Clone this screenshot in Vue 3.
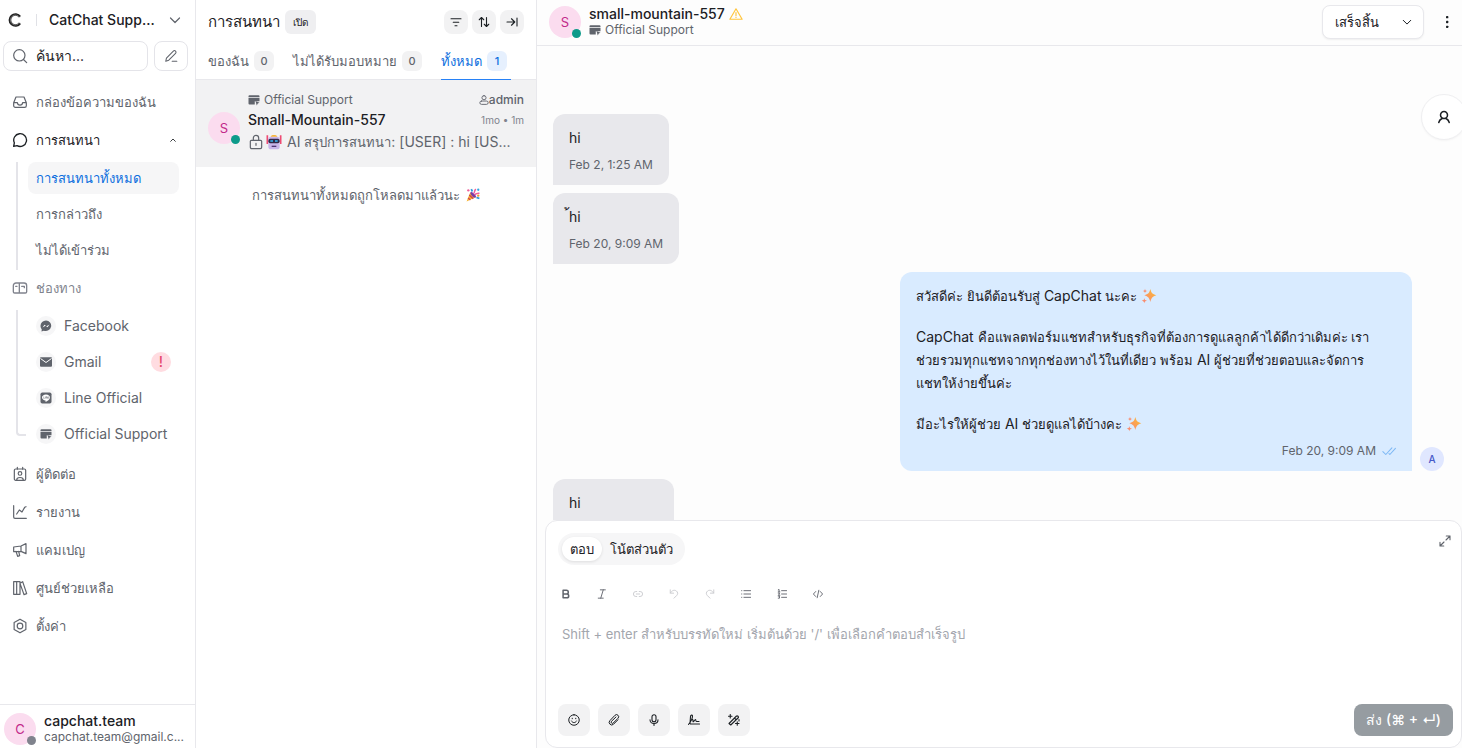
<template>
  <div class="app">
    <aside class="sidebar">
      <header class="brand">
        <Icon name="logo" class="brand-logo" />
        <span class="brand-divider"></span>
        <button type="button" class="account-switch">
          <span class="account-name">CatChat Supp...</span>
          <Icon name="chevronDown" class="icon-12" />
        </button>
      </header>
      <div class="search-row">
        <label class="search">
          <Icon name="search" class="icon-16" />
          <input v-model="search" type="text" placeholder="ค้นหา..." aria-label="ค้นหา" />
        </label>
        <button type="button" class="compose-button" aria-label="เขียนข้อความ">
          <Icon name="pen" class="icon-14" />
        </button>
      </div>

      <nav class="nav">
        <a href="#" class="nav-item"><Icon name="inbox" class="icon-16" /><span>กล่องข้อความของฉัน</span></a>
        <button type="button" class="nav-item is-open" @click="showConversations = !showConversations">
          <Icon name="bubble" class="icon-16" />
          <span>การสนทนา</span>
          <Icon name="chevronUp" class="nav-caret" />
        </button>
        <ul v-if="showConversations" class="sub-nav">
          <li v-for="item in views" :key="item">
            <a href="#" class="sub-item" :class="{ active: item === currentView }" @click.prevent="currentView = item">{{ item }}</a>
          </li>
        </ul>
        <a href="#" class="nav-item muted"><Icon name="mailbox" class="icon-16" /><span>ช่องทาง</span></a>
        <ul class="sub-nav tree">
          <li v-for="channel in channels" :key="channel.name">
            <a href="#" class="sub-item channel">
              <span class="channel-icon"><Icon :name="channel.icon" class="icon-12" /></span>
              <span>{{ channel.name }}</span>
              <span v-if="channel.warning" class="channel-warning">!</span>
            </a>
          </li>
        </ul>
        <a v-for="item in links" :key="item.label" href="#" class="nav-item">
          <Icon :name="item.icon" class="icon-16" /><span>{{ item.label }}</span>
        </a>
      </nav>

      <footer class="profile">
        <span class="avatar">C<i class="status offline"></i></span>
        <span class="profile-text">
          <strong>capchat.team</strong>
          <small>capchat.team@gmail.c...</small>
        </span>
      </footer>
    </aside>

    <section class="list">
      <header class="list-header">
        <h1>การสนทนา</h1>
        <span class="list-status">เปิด</span>
        <div class="list-actions">
          <button type="button" aria-label="ตัวกรอง"><Icon name="filter" class="icon-12" /></button>
          <button type="button" aria-label="เรียงลำดับ"><Icon name="sort" class="icon-12" /></button>
          <button type="button" aria-label="ขยาย"><Icon name="arrowEnd" class="icon-12" /></button>
        </div>
      </header>
      <div class="tabs">
        <button
          v-for="tab in tabs"
          :key="tab.label"
          type="button"
          class="tab"
          :class="{ active: tab.label === currentTab }"
          @click="currentTab = tab.label"
        >
          {{ tab.label }}<span class="tab-count">{{ tab.count }}</span>
        </button>
      </div>
      <article class="card">
        <span class="avatar">S<i class="status online"></i></span>
        <div class="card-body">
          <div class="card-row small">
            <span class="inbox-name"><Icon name="website" class="icon-12" />Official Support</span>
            <span class="assignee"><Icon name="person" class="icon-10" />admin</span>
          </div>
          <div class="card-row">
            <h2>Small-Mountain-557</h2>
            <time>1mo • 1m</time>
          </div>
          <p class="preview">
            <Icon name="lock" class="icon-16" />
            <Icon name="robot" class="icon-16" />
            <span class="preview-text">AI <span class="thai">สรุปการสนทนา</span>: [USER] : hi [US...</span>
          </p>
        </div>
      </article>
      <p class="list-end">การสนทนาทั้งหมดถูกโหลดมาแล้วนะ <Icon name="party" class="icon-14" /></p>
    </section>

    <main class="chat">
      <header class="chat-header">
        <span class="avatar">S<i class="status online"></i></span>
        <div class="contact">
          <h2>small-mountain-557 <Icon name="warning" class="icon-14 warning" /></h2>
          <span class="inbox-name"><Icon name="website" class="icon-12" />Official Support</span>
        </div>
        <button type="button" class="resolve">เสร็จสิ้น<Icon name="chevronDown" class="icon-10" /></button>
        <button type="button" class="more" aria-label="เพิ่มเติม"><Icon name="dots" class="icon-16" /></button>
      </header>

      <div class="messages">
        <button type="button" class="contact-toggle" aria-label="ผู้ติดต่อ"><Icon name="contact" class="icon-14" /></button>
        <div v-for="(message, index) in messages" :key="index" class="message" :class="{ outgoing: message.outgoing }">
          <div class="bubble">
            <p v-for="line in message.lines" :key="line.text">
              <template v-for="(run, i) in splitRuns(line.text)" :key="i">
                <span v-if="i % 2" class="thai">{{ run }}</span>
                <template v-else>{{ run }}</template>
              </template>
              <Icon v-if="line.sparkle" name="sparkles" class="icon-16" />
            </p>
            <span class="meta">{{ message.time }}<Icon v-if="message.outgoing" name="checks" class="icon-14" /></span>
          </div>
          <span v-if="message.outgoing" class="sender">A</span>
        </div>
      </div>

      <form class="composer" @submit.prevent>
        <div class="composer-top">
          <div class="modes">
            <button type="button" :class="{ active: mode === 'reply' }" @click="mode = 'reply'">ตอบ</button>
            <button type="button" :class="{ active: mode === 'note' }" @click="mode = 'note'">โน้ตส่วนตัว</button>
          </div>
          <button type="button" class="expand" aria-label="ขยาย"><Icon name="expand" class="icon-12" /></button>
        </div>
        <div class="toolbar">
          <button v-for="tool in tools" :key="tool.icon" type="button" :disabled="tool.disabled" :aria-label="tool.icon">
            <Icon :name="tool.icon" class="icon-10" />
          </button>
        </div>
        <textarea
          v-model="draft"
          aria-label="ข้อความ"
          placeholder="Shift + enter สำหรับบรรทัดใหม่ เริ่มต้นด้วย '/' เพื่อเลือกคำตอบสำเร็จรูป"
        ></textarea>
        <div class="composer-bottom">
          <button v-for="name in attachments" :key="name" type="button" class="attach" :aria-label="name">
            <Icon :name="name" class="icon-12" />
          </button>
          <button type="submit" class="send">ส่ง (⌘ + ↵)</button>
        </div>
      </form>
    </main>
  </div>
</template>

<script setup>
import { h, ref } from 'vue';

const stroke = (d, width = 1.8) =>
  `<path d="${d}" fill="none" stroke="currentColor" stroke-width="${width}" stroke-linecap="round" stroke-linejoin="round"/>`;

const icons = {
  logo: '<path d="M20.500 6.500A9.500 9.500 0 1 0 20.500 17.500" fill="none" stroke="#222" stroke-width="4.500"/><path d="M20 7.500A8.500 8.500 0 1 0 20 16.500" fill="none" stroke="#aaa" stroke-width="1"/>',
  chevronDown: stroke('M3 8l9 9 9-9', 2.4),
  chevronUp: stroke('M5 16l7-7 7 7', 2.6),
  search: stroke('M11 2.500a8.500 8.500 0 1 0 0 17 8.500 8.500 0 0 0 0-17zM17.200 17.200L22 22'),
  pen: stroke('M3 21l1.200-5.500L16 3.500a2.600 2.600 0 0 1 3.800 3.800L8.200 19.200zM14 21h8'),
  inbox: stroke('M2.500 13L6 4.500h12l3.500 8.500v4.500a2.500 2.500 0 0 1-2.500 2.500H5a2.500 2.500 0 0 1-2.500-2.500zM2.500 13H8c.5 5 7.500 5 8 0h5.500'),
  bubble: stroke('M2.500 21.500l1-5.300A9.600 9.600 0 1 1 7.500 20.500z', 2),
  mailbox: stroke('M6 4.500h12a4 4 0 0 1 4 4v9a2 2 0 0 1-2 2H4a2 2 0 0 1-2-2v-9a4 4 0 0 1 4-4zM11 5v14M5.500 9.500h2M14.500 9.500h4v2', 2),
  messenger: '<path d="M12 1a11 10.500 0 0 0-11 10.500c0 2.800 1 5 2.500 7L3 23l4.500-1.700A11 10.500 0 1 0 12 1z" fill="currentColor"/><path d="M5 15l4-5.500 4 3 6-3.500-4 5.500-4-3z" fill="#fff"/>',
  mail: '<rect x="0" y="2.500" width="24" height="19" rx="2" fill="currentColor"/><path d="M1 5l11 8 11-8" fill="none" stroke="#fff" stroke-width="2"/>',
  line: '<rect x="1" y="1" width="22" height="22" rx="3.500" fill="currentColor"/><path d="M12 5c-4.600 0-8 2.700-8 6.100 0 3.200 3.200 5.500 7.100 5.900v3c3.200-1.600 8.900-4.900 8.900-8.900C20 7.700 16.600 5 12 5z" fill="#fff"/><path d="M7.500 9v4H9M11 9v4M13 13V9l2.500 4V9M17.500 9v4" fill="none" stroke="currentColor" stroke-width="1"/>',
  website: '<path d="M1 4.500a2 2 0 0 1 2-2h18a2 2 0 0 1 2 2v2H1zM1 8h22v6.500h-9.500V21H3a2 2 0 0 1-2-2z" fill="currentColor"/><path d="M15 14l8 3.500-3.500 1.500-2 4z" fill="currentColor"/>',
  contacts: stroke('M5.500 4.500h13a2 2 0 0 1 2 2v13a2 2 0 0 1-2 2h-13a2 2 0 0 1-2-2v-13a2 2 0 0 1 2-2zM8 2v3M16 2v3M12 8.500a2.700 2.700 0 1 0 0 5.400 2.700 2.700 0 0 0 0-5.400zM7 21c0-5 10-5 10 0'),
  chart: stroke('M2.500 2.500v17a2 2 0 0 0 2 2h17M7 15l4-6 4 3 4-7 2-1'),
  campaign: stroke('M2.500 7.500l11-1.500 7.500-3.500v15l-7.500-3.500-11 .5zM13.500 6v7.500M6 14l2.500 7.500 3-1L10 14'),
  book: stroke('M2.500 2.500h4.500v19H2.500zM7 2.500h5v19H7zM12 5l4-2.500 6 18-4 1.500z'),
  settings: stroke('M12 1.800l8.800 5v10.400l-8.800 5-8.800-5V6.800zM12 7.800a4.200 4.200 0 1 0 0 8.400 4.200 4.200 0 0 0 0-8.400z'),
  filter: stroke('M2 5.500h20M6.500 12.500h11M10 19.500h4', 2.2),
  sort: stroke('M7 21V3M2.500 7.500L7 3l4.500 4.500M17 3v18M12.500 16.500L17 21l4.500-4.500', 2.2),
  arrowEnd: stroke('M2 12h15M11 5.500l6.500 6.500-6.500 6.500M22 4v16', 2.2),
  person: stroke('M12 1.500a5 5 0 1 0 0 10 5 5 0 0 0 0-10zM6 14.500h12a4 4 0 0 1 0 8H6a4 4 0 0 1 0-8z', 2.2),
  contact: stroke('M12 2.500a6 6 0 1 0 0 12 6 6 0 0 0 0-12zM3 21.500c1-4 3.500-6 5.500-7M21 21.500c-1-4-3.500-6-5.500-7', 2.6),
  lock: stroke('M5 9.500h14a1.500 1.500 0 0 1 1.500 1.500v9a2 2 0 0 1-2 2h-13a2 2 0 0 1-2-2v-9A1.500 1.500 0 0 1 5 9.500zM8 9V6a4 4 0 0 1 8 0v3M12 14v3'),
  robot: '<path d="M2 2v13M22 2v13" stroke="#ee4b73" stroke-width="2.500"/><rect x="3.500" y="4" width="17" height="19" rx="4" fill="#c9b6ea"/><path d="M7 4c0-3.500 10-3.500 10 0z" fill="#f6b33b"/><rect x="3.500" y="7" width="17" height="7" rx="3" fill="#322948"/><path d="M6.500 10.500h4M13.500 10.500h4" stroke="#39b7f5" stroke-width="2.400"/><path d="M8.500 18.500h7" stroke="#503673" stroke-width="2"/>',
  party: '<path d="M1 23L7 8c5 1 8 4 9 8z" fill="#f7b52d"/><path d="M3.500 17l4 3.500M5.500 12l7 6.500" stroke="#cf3b55" stroke-width="2"/><path d="M8 7c-3 3 6 12 9 9 2-2-6-11-9-9z" fill="#7a3ca5"/><path d="M13 9c3-1 0-4 4-7M15 12c3-4 5-1 8-4" fill="none" stroke="#ee5f9b" stroke-width="2.500"/><path d="M9 2l2 4M18 16l5 2" stroke="#2e9cdb" stroke-width="3"/><circle cx="4" cy="4" r="2" fill="#ee5f9b"/><circle cx="21" cy="3" r="2" fill="#35a8e0"/><circle cx="21" cy="13" r="2" fill="#f29a2e"/>',
  sparkles: '<defs><linearGradient id="spark" x1="0" y1="1" x2="1" y2="0"><stop offset="0" stop-color="#f98577"/><stop offset="1" stop-color="#fbc02d"/></linearGradient></defs><path d="M14 1.500c1.500 6 3 7.500 9 9.500-6 2-7.500 4-9 10-1.500-6-3-8-9-10 6-2 7.500-3.500 9-9.500z" fill="url(#spark)"/><path d="M6 1c.5 2.500 1 3 3.500 3.500C7 5 6.500 5.500 6 8c-.5-2.500-1-3-3.500-3.500C5 4 5.500 3.500 6 1zM5 15c.5 2.700 1.300 3.500 4 4-2.700.5-3.500 1.300-4 4-.5-2.700-1.300-3.500-4-4 2.700-.5 3.500-1.300 4-4z" fill="#f98c6e"/>',
  warning: stroke('M12 3L1.500 21h21zM12 9.500v5.500M12 17.500v.5', 2),
  dots: '<g fill="currentColor"><rect x="10.500" y="3" width="3.500" height="3.500" rx="1"/><rect x="10.500" y="10.200" width="3.500" height="3.500" rx="1"/><rect x="10.500" y="17.500" width="3.500" height="3.500" rx="1"/></g>',
  checks: stroke('M1.500 13l5 5L17 6.500M12 16.500l1.500 1.500L23 7.500', 1.8),
  expand: stroke('M14 10l8-8M14.500 2H22v7.500M10 14l-8 8M2 14.500V22h7.500', 2.2),
  bold: stroke('M5 3h8a4.500 4.500 0 0 1 0 9H5zM5 12h9a4.500 4.500 0 0 1 0 9H5z', 3.6),
  italic: stroke('M8 2h12M3 22h12M15 2L9 22', 2.2),
  link: stroke('M9 18H7A6 6 0 0 1 7 6h2M15 6h2a6 6 0 0 1 0 12h-2M8 12h8', 2.2),
  undo: stroke('M3 2v8h8M3.500 9.500C7 3 13 1.500 17.500 4.500c4.500 3.500 4 8 1 11L12 22', 2.2),
  redo: stroke('M21 2v8h-8M20.500 9.500C17 3 11 1.500 6.500 4.500c-4.500 3.500-4 8-1 11L12 22', 2.2),
  bullets: stroke('M7 4h16M7 12h16M7 20h16M1.500 4h.5M1.500 12h.5M1.500 20h.5', 2.2),
  numbers: stroke('M11 4h12M11 12h12M11 20h12M3 2l2-1v6M3 7h4M3 10h3v2l-3 3h4M3 17h3v5H3', 2.2),
  code: stroke('M6.500 6L1 12l5.500 6M17.500 6l5.500 6-5.500 6M14 3l-4 18', 2.2),
  emoji: stroke('M12 1.500a10.500 10.500 0 1 0 0 21 10.500 10.500 0 0 0 0-21zM7 14c2 4.500 8 4.500 10 0M8.500 8.500v1M15.500 8.500v1', 2),
  clip: stroke('M20 11.500l-9 9a5 5 0 0 1-7-7.500L14 2.500a4 4 0 0 1 6 6L10.500 18a2.400 2.400 0 0 1-3.500-3.500L16 6', 2),
  mic: stroke('M12 1.500A4 4 0 0 0 8 5.500v6a4 4 0 0 0 8 0v-6A4 4 0 0 0 12 1.500zM4 11.500c0 10 16 10 16 0M12 19v4', 2.2),
  signature: stroke('M1 21C5 16 9 8 9 4c0-3-4-2-4 1L4 19M5 15c3-6 5-5 5-1 0 5 3-3 5-3 1 0 0 4 2 4h5M5 20h18', 2.2),
  wand: stroke('M2 19L16.500 4.500a2 2 0 0 1 3.500 3.500L5.500 22zM13 8l3 3M4.500 1v7M1 4.500h7M18.500 15.500v7M15 19h7M22 11v3', 2.2),
};

const Icon = (props) => h('svg', { viewBox: '0 0 24 24', 'aria-hidden': 'true', innerHTML: icons[props.name] });
Icon.props = ['name'];

// odd entries are Thai words, set one step smaller than the Latin text
const splitRuns = (text) => text.split(/([ก-ฮเ-ไ][\u0E00-\u0E7F]*)/);

const search = ref('');
const draft = ref('');
const mode = ref('reply');
const showConversations = ref(true);
const currentView = ref('การสนทนาทั้งหมด');
const currentTab = ref('ทั้งหมด');

const views = ['การสนทนาทั้งหมด', 'การกล่าวถึง', 'ไม่ได้เข้าร่วม'];
const channels = [
  { name: 'Facebook', icon: 'messenger' },
  { name: 'Gmail', icon: 'mail', warning: true },
  { name: 'Line Official', icon: 'line' },
  { name: 'Official Support', icon: 'website' }
];
const links = [
  { label: 'ผู้ติดต่อ', icon: 'contacts' },
  { label: 'รายงาน', icon: 'chart' },
  { label: 'แคมเปญ', icon: 'campaign' },
  { label: 'ศูนย์ช่วยเหลือ', icon: 'book' },
  { label: 'ตั้งค่า', icon: 'settings' }
];
const tabs = [
  { label: 'ของฉัน', count: 0 },
  { label: 'ไม่ได้รับมอบหมาย', count: 0 },
  { label: 'ทั้งหมด', count: 1 }
];
const messages = [
  { lines: [{ text: 'hi' }], time: 'Feb 2, 1:25 AM' },
  { lines: [{ text: '้hi' }], time: 'Feb 20, 9:09 AM' },
  {
    outgoing: true,
    time: 'Feb 20, 9:09 AM',
    lines: [
      { text: 'สวัสดีค่ะ ยินดีต้อนรับสู่ CapChat นะคะ ', sparkle: true },
      { text: 'CapChat คือแพลตฟอร์มแชทสำหรับธุรกิจที่ต้องการดูแลลูกค้าได้ดีกว่าเดิมค่ะ เรา\nช่วยรวมทุกแชทจากทุกช่องทางไว้ในที่เดียว พร้อม AI ผู้ช่วยที่ช่วยตอบและจัดการ\nแชทให้ง่ายขึ้นค่ะ' },
      { text: 'มีอะไรให้ผู้ช่วย AI ช่วยดูแลได้บ้างคะ ', sparkle: true }
    ]
  },
  { lines: [{ text: 'hi' }], time: 'Feb 20, 9:11 AM' }
];
const tools = [
  { icon: 'bold' },
  { icon: 'italic' },
  { icon: 'link', disabled: true },
  { icon: 'undo', disabled: true },
  { icon: 'redo', disabled: true },
  { icon: 'bullets' },
  { icon: 'numbers' },
  { icon: 'code' }
];
const attachments = ['emoji', 'clip', 'mic', 'signature', 'wand'];
</script>

<style>
body {
  margin: 0;
}
</style>

<style scoped>
.app {
  display: flex;
  height: 100vh;
  overflow: hidden;
  background: #fff;
  color: #1c2024;
  font-family: Inter, Tahoma, sans-serif;
  font-size: 14px;
  line-height: 20px;
}
.app *,
.app *::before {
  box-sizing: border-box;
}
button,
input,
textarea {
  padding: 0;
  border: 0;
  background: none;
  color: inherit;
  font: inherit;
}
button {
  display: flex;
  align-items: center;
  justify-content: center;
  cursor: pointer;
}
a {
  color: inherit;
  text-decoration: none;
}
h1,
h2,
p,
ul {
  margin: 0;
  padding: 0;
  list-style: none;
}
svg {
  flex: none;
}
.thai {
  font-size: 13px;
  line-height: 16px;
}
.icon-10 {
  width: 10px;
  height: 10px;
}
.icon-12 {
  width: 12px;
  height: 12px;
}
.icon-14 {
  width: 14px;
  height: 14px;
}
.icon-16 {
  width: 16px;
  height: 16px;
}

/* sidebar */
.sidebar {
  flex: none;
  display: flex;
  flex-direction: column;
  width: 196px;
  border-right: 1px solid #e8e8ec;
}
.brand {
  display: flex;
  align-items: center;
  height: 40px;
  padding: 0 14px 0 8px;
}
.brand-logo {
  width: 14px;
  height: 14px;
}
.brand-divider {
  width: 1px;
  height: 12px;
  margin: 0 12px 0 14px;
  background: #e0e1e6;
}
.account-switch {
  flex: 1;
  justify-content: space-between;
}
.account-switch svg {
  color: #60646c;
}
.account-name {
  font-weight: 500;
}
.search-row {
  display: flex;
  gap: 6px;
  padding: 1px 7px 0 3px;
}
.search {
  flex: 1;
  display: flex;
  align-items: center;
  gap: 8px;
  min-width: 0;
  height: 30px;
  padding: 0 8px;
  border: 1px solid #e4e4e9;
  border-radius: 8px;
  color: #60646c;
}
.search input {
  width: 100%;
  min-width: 0;
  outline: 0;
}
.search input::placeholder {
  color: #1c2024;
  opacity: 1;
}
.compose-button {
  width: 34px;
  height: 30px;
  border: 1px solid #e4e4e9;
  border-radius: 8px;
  color: #60646c;
}
.nav {
  flex: 1;
  display: flex;
  flex-direction: column;
  gap: 6px;
  min-height: 0;
  padding: 15px 16px 0 12px;
  color: #60646c;
  font-size: 13px;
}
.nav-item {
  display: flex;
  align-items: center;
  justify-content: flex-start;
  gap: 8px;
  height: 32px;
}
.nav-item.is-open {
  color: #1c2024;
  font-weight: 500;
}
.nav-item.muted {
  color: #80838d;
}
.nav-caret {
  width: 8px;
  height: 8px;
  margin: 0 2px 0 auto;
}
.sub-nav {
  position: relative;
  display: flex;
  flex-direction: column;
  gap: 4px;
  padding-left: 16px;
}
.sub-nav::before {
  content: '';
  position: absolute;
  top: 0;
  bottom: -4px;
  left: 4px;
  width: 2px;
  background: #e4e4e9;
}
.sub-nav.tree {
  padding-bottom: 2px;
}
.sub-nav.tree::before {
  bottom: 16px;
  width: 10px;
  border: solid #e4e4e9;
  border-width: 0 0 2px 2px;
  border-radius: 0 0 0 4px;
  background: none;
}
.sub-item {
  display: flex;
  align-items: center;
  height: 32px;
  padding: 0 8px;
  border-radius: 8px;
}
.sub-item.active {
  background: #f6f6f7;
  color: #0d6fde;
}
.channel {
  gap: 8px;
  font-size: 14px;
}
.channel-icon {
  display: flex;
  align-items: center;
  justify-content: center;
  width: 20px;
  height: 20px;
  border-radius: 10px;
  background: #f6f6f7;
}
.channel-warning {
  width: 20px;
  height: 20px;
  margin-left: auto;
  border-radius: 10px;
  background: #ffdce1;
  color: #e5486d;
  font-weight: 500;
  text-align: center;
}
.profile {
  display: flex;
  align-items: center;
  gap: 8px;
  height: 44px;
  padding: 4px 4px 0;
  border-top: 1px solid #e8e8ec;
}
.profile-text {
  display: flex;
  flex-direction: column;
}
.profile strong {
  font-weight: 500;
  line-height: 16px;
}
.profile small {
  color: #60646c;
  font-size: 12px;
  line-height: 16px;
}
.avatar {
  position: relative;
  flex: none;
  display: flex;
  align-items: center;
  justify-content: center;
  width: 32px;
  height: 32px;
  border-radius: 16px;
  background: #fbdcef;
  color: #c2298a;
  font-size: 13px;
}
.status {
  position: absolute;
  right: 0;
  bottom: 0;
  width: 9px;
  height: 9px;
  border-radius: 5px;
}
.online {
  background: #0d9b8a;
}
.offline {
  background: #80838d;
}

/* conversation list */
.list {
  flex: none;
  width: 341px;
  border-right: 1px solid #e8e8ec;
}
.list-header {
  display: flex;
  align-items: center;
  gap: 5px;
  height: 44px;
  padding: 0 12px;
}
.list-header h1 {
  font-size: 15px;
  font-weight: 500;
}
.list-status {
  padding: 2px 8px;
  border-radius: 6px;
  background: #efeff1;
  font-size: 10px;
}
.list-actions {
  display: flex;
  gap: 4px;
  margin-left: auto;
}
.list-actions button {
  width: 24px;
  height: 24px;
  border-radius: 8px;
  background: #f2f2f3;
}
.tabs {
  display: flex;
  gap: 15px;
  height: 36px;
  padding: 0 12px;
  border-bottom: 1px solid #e8e8ec;
}
.tab {
  gap: 5px;
  height: 36px;
  padding: 0 4px 2px 0;
  border-bottom: 1px solid transparent;
  color: #60646c;
  font-size: 13px;
  white-space: nowrap;
}
.tab.active {
  border-color: #2781f6;
  color: #0d6fde;
}
.tab-count {
  width: 20px;
  border-radius: 6px;
  background: #f2f2f3;
  font-size: 11px;
  font-weight: 500;
}
.tab.active .tab-count {
  background: #e6f0fe;
}
.card {
  display: flex;
  gap: 8px;
  height: 87px;
  padding: 10px 12px 0;
  background: #f2f2f3;
}
.card .avatar {
  margin-top: 22px;
}
.card-body {
  flex: 1;
  min-width: 0;
  color: #60646c;
}
.card-row {
  display: flex;
  align-items: center;
  justify-content: space-between;
}
.card-row.small {
  font-size: 12px;
}
.card-row h2 {
  color: #1c2024;
  font-size: 14px;
  font-weight: 500;
}
.card-row time {
  color: #80838d;
  font-size: 10px;
}
.inbox-name {
  display: flex;
  align-items: center;
  gap: 4px;
  color: #60646c;
  font-size: 12px;
  line-height: 16px;
}
.assignee {
  display: flex;
  align-items: center;
  font-weight: 500;
}
.preview {
  display: flex;
  align-items: center;
  gap: 2px;
  line-height: 24px;
  white-space: nowrap;
}
.preview-text {
  margin-left: 3px;
}
.list-end {
  display: flex;
  align-items: center;
  justify-content: center;
  gap: 6px;
  padding: 18px 16px;
  color: #60646c;
  font-size: 13px;
}

/* chat */
.chat {
  flex: 1;
  display: flex;
  flex-direction: column;
  min-width: 0;
  background: #fdfdfd;
}
.chat-header {
  display: flex;
  align-items: center;
  gap: 8px;
  height: 46px;
  padding: 0 0 2px 12px;
  border-bottom: 1px solid #e8e8ec;
}
.contact {
  flex: 1;
}
.contact h2 {
  display: flex;
  align-items: center;
  gap: 4px;
  font-size: 14px;
  font-weight: 500;
  line-height: 16px;
}
.warning {
  color: #ffc53d;
}
.resolve {
  justify-content: space-between;
  width: 102px;
  height: 34px;
  padding: 0 11px 0 12px;
  border: 1px solid #e8e8ec;
  border-radius: 8px;
  background: #fff;
  box-shadow: 0 1px 2px rgba(0, 0, 0, 0.06);
  font-size: 13px;
}
.more {
  width: 30px;
  height: 32px;
}
.messages {
  position: relative;
  flex: 1;
  display: flex;
  flex-direction: column;
  gap: 8px;
  min-height: 0;
  padding: 68px 18px 0 16px;
  overflow: hidden;
}
.contact-toggle {
  position: absolute;
  top: 48px;
  right: -5px;
  width: 46px;
  height: 46px;
  border: 1px solid #efeff1;
  border-radius: 23px;
  background: #fff;
  box-shadow: 0 1px 2px rgba(0, 0, 0, 0.04);
}
.message {
  display: flex;
  align-items: flex-end;
  gap: 8px;
}
.message.outgoing {
  justify-content: flex-end;
}
.bubble {
  max-width: 512px;
  padding: 12px 16px;
  border-radius: 12px 12px 12px 0;
  background: #e8e8ec;
}
.outgoing .bubble {
  flex: 0 1 512px;
  border-radius: 12px 12px 0 12px;
  background: #d9ebff;
}
.bubble p {
  line-height: 23px;
  white-space: pre-line;
}
.bubble p + p {
  margin-top: 18px;
}
.bubble p svg {
  vertical-align: -3px;
}
.meta {
  display: flex;
  align-items: center;
  gap: 6px;
  margin-top: 8px;
  color: #60646c;
  font-size: 12px;
  line-height: 16px;
}
.outgoing .meta {
  justify-content: flex-end;
}
.meta svg {
  color: #7db8f5;
}
.sender {
  width: 24px;
  height: 24px;
  border-radius: 12px;
  background: #e0e7ff;
  color: #4658c8;
  font-size: 10px;
  font-weight: 500;
  line-height: 24px;
  text-align: center;
}
.composer {
  flex: none;
  display: flex;
  flex-direction: column;
  height: 228px;
  margin-left: 8px;
  padding: 12px 8px 11px 12px;
  border: 1px solid #e8e8ec;
  border-radius: 12px;
  background: #fff;
}
.composer-top {
  display: flex;
  align-items: flex-start;
  justify-content: space-between;
}
.modes {
  display: flex;
  height: 32px;
  padding: 4px;
  border-radius: 16px;
  background: #f6f6f7;
  font-size: 13px;
}
.modes button {
  padding: 0 8px;
  border-radius: 12px;
}
.modes .active {
  background: #fff;
  box-shadow: 0 1px 3px rgba(0, 0, 0, 0.1);
}
.expand {
  width: 16px;
  height: 16px;
  color: #60646c;
}
.toolbar {
  display: flex;
  gap: 20px;
  margin-top: 21px;
}
.toolbar button {
  width: 16px;
  height: 16px;
  color: #60646c;
}
.toolbar button:disabled {
  color: #c9cacf;
}
textarea {
  flex: 1;
  margin: 22px 4px 0;
  outline: 0;
  font-size: 13px;
  resize: none;
}
textarea::placeholder {
  color: #a3a6ad;
  opacity: 1;
}
.composer-bottom {
  display: flex;
  gap: 8px;
}
.attach {
  width: 32px;
  height: 32px;
  border-radius: 8px;
  background: #f2f2f3;
}
.send {
  height: 32px;
  margin-left: auto;
  padding: 0 12px;
  border-radius: 8px;
  background: #969ca1;
  color: #fff;
  font-weight: 500;
}
</style>
